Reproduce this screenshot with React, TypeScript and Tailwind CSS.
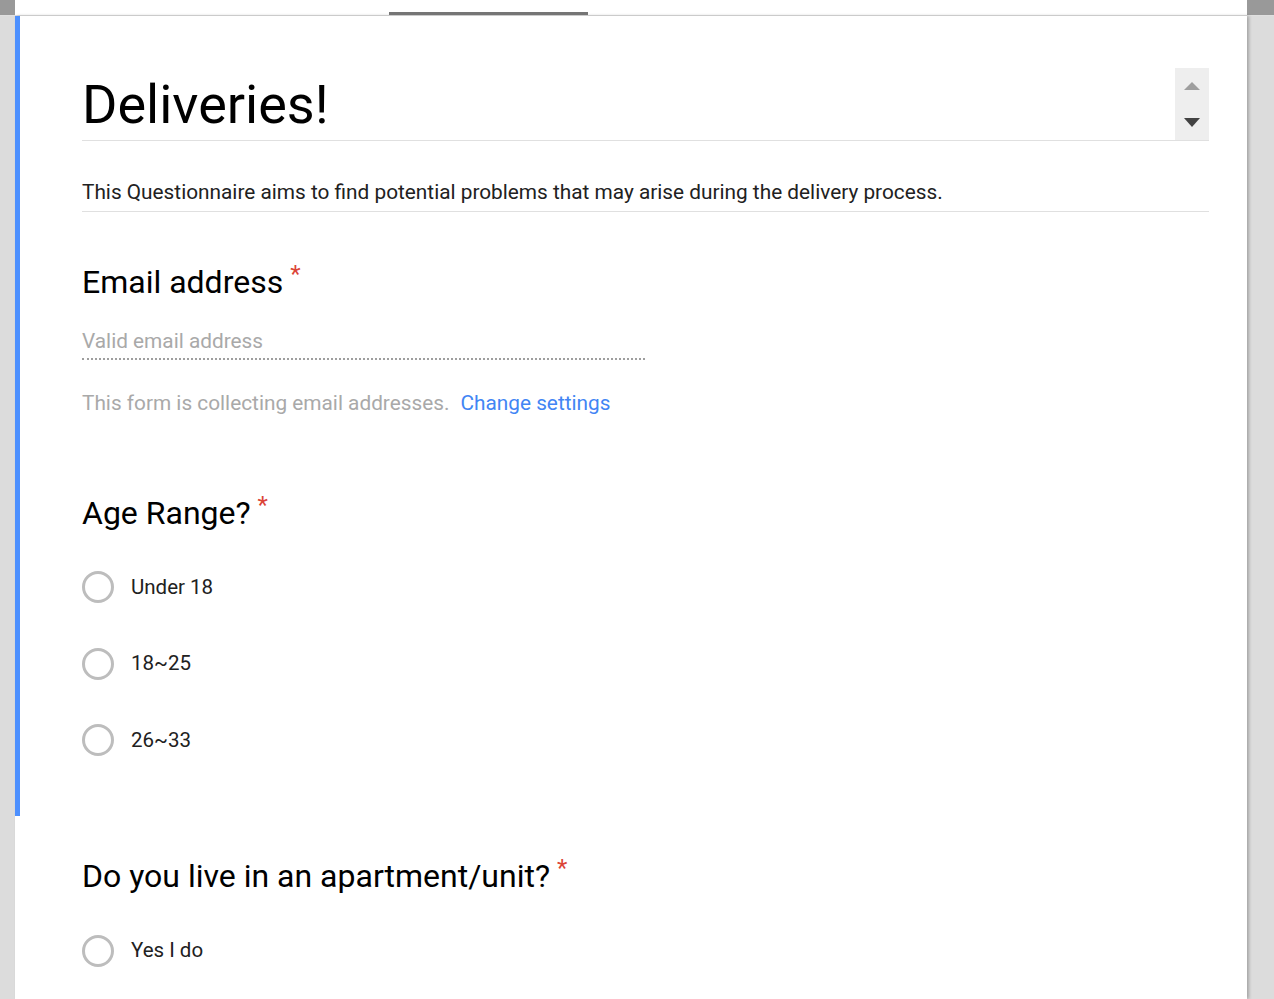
const font = { fontFamily: "Roboto, 'Noto Sans', sans-serif" };

const Radio = ({ label }: { label: string }) => (
  <div className="flex items-center h-[76.5px]">
    <span className="w-8 h-8 rounded-full border-[3px] border-[#bdbdbd] shrink-0" />
    <span className="ml-[17px] text-[20.5px] text-[#212121]">{label}</span>
  </div>
);

const Question = ({ title }: { title: string }) => (
  <div className="flex items-start">
    <h2 className="text-[32px] leading-[40px] text-black">{title}</h2>
    <span className="ml-[7px] text-[24px] leading-[24px] text-[#db4437]">*</span>
  </div>
);

export default function App() {
  return (
    <div className="min-h-[999px] bg-[#dcdcdc] flex flex-col" style={font}>
      <div className="h-[16px] flex bg-white border-b border-[#e0e0e0]">
        <div className="w-[15px] bg-[#999]" />
        <div className="flex-1 relative">
          <div className="absolute left-[374px] bottom-0 w-[199px] h-[3px] bg-[#757575]" />
        </div>
        <div className="w-[27px] bg-[#999]" />
      </div>
      <div className="flex flex-1">
        <div className="w-[15px]" />
        <div className="w-[1232px] bg-white flex shadow-[2px_0_3px_rgba(0,0,0,0.25)]">
          <div className="w-[5px] h-[800px] bg-[#4d90fe] shrink-0" />
          <div className="flex-1 pl-[62px] pr-[38px] pt-[52px]">
            <div className="flex border-b border-[#e0e0e0]">
              <h1 className="flex-1 text-[54px] leading-[70px] text-black pt-[2px]">Deliveries!</h1>
              <div className="w-[34px] bg-[#eeeeee] flex flex-col items-center justify-between pt-[14px] pb-[13px]">
                <svg width="16" height="8" viewBox="0 0 16 8">
                  <path d="M0 8 L8 0 L16 8 Z" fill="#9e9e9e" />
                </svg>
                <svg width="16" height="9" viewBox="0 0 16 9">
                  <path d="M0 0 L16 0 L8 9 Z" fill="#424242" />
                </svg>
              </div>
            </div>
            <p className="mt-[38px] pb-[6px] text-[20.8px] leading-[26px] text-[#212121] border-b border-[#e0e0e0]">
              This Questionnaire aims to find potential problems that may arise during the delivery process.
            </p>
            <div className="mt-[50px]">
              <Question title="Email address" />
              <div className="mt-[26px] w-[563px] pb-[4px] border-b-2 border-dotted border-[#9e9e9e] text-[20.8px] leading-[26px] text-[#a9a9a9]">
                Valid email address
              </div>
              <p className="mt-[30px] text-[20.8px] leading-[26px] text-[#a9a9a9]">
                This form is collecting email addresses.
                <a className="ml-[11px] text-[#4285f4]">Change settings</a>
              </p>
            </div>
            <div className="mt-[77px]">
              <Question title="Age Range?" />
              <div className="mt-[16px]">
                <Radio label="Under 18" />
                <Radio label="18~25" />
                <Radio label="26~33" />
              </div>
            </div>
            <div className="mt-[77px]">
              <Question title="Do you live in an apartment/unit?" />
              <div className="mt-[17px]">
                <Radio label="Yes I do" />
              </div>
            </div>
          </div>
        </div>
        <div className="w-[27px]" />
      </div>
    </div>
  );
}
